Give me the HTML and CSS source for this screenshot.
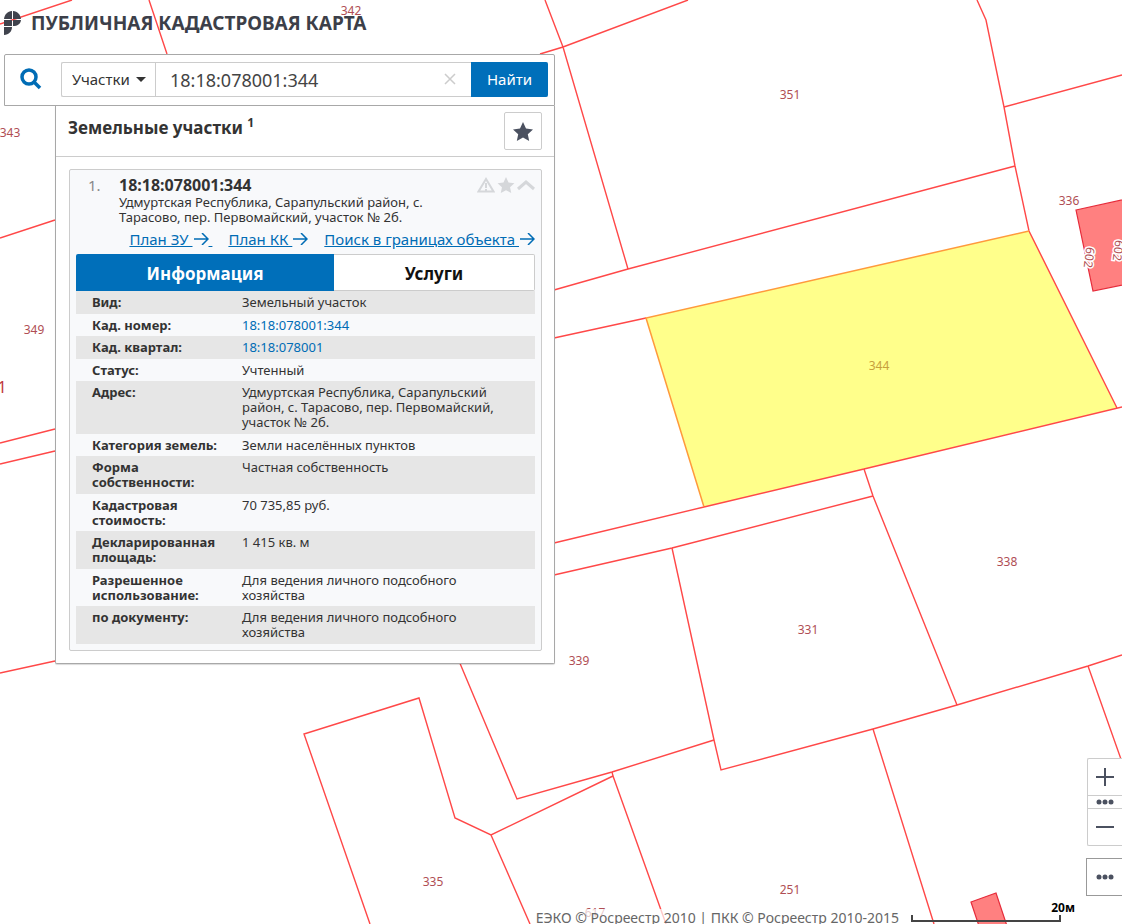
FILE: index.html
```html
<!DOCTYPE html>
<html lang="ru">
<head>
<meta charset="utf-8">
<meta name="viewport" content="width=device-width, initial-scale=1">
<title>Публичная кадастровая карта</title>
<link rel="stylesheet" href="styles.css">
</head>
<body>
<svg class="map" viewBox="0 0 1122 924" preserveAspectRatio="xMinYMin slice" role="img" aria-label="Карта участков">
  <polygon class="parcel" points="646,318 1029,231 1117,408 864,469 704,507"/>
  <g class="boundaries">
    <path d="M0 24 72 0M149 0 167 54M0 238 55 220M0 443 55 429M0 464 55 451M0 673 55 661"/>
    <path d="M540 54 563 47 688 0M545 0 563 47 628 269M554 290 628 269 1015 166M1122 75 1004 107"/>
    <path d="M977 0 986 20 1004 107 1015 166 1029 231 1117 408"/>
    <path d="M554 338 646 318M554 543 704 507M864 469 1122 407M554 575 672 548 873 496"/>
    <path d="M864 469 873 496 957 705M672 548 714 740 721 770 873 729 957 705 1088 666 1122 655"/>
    <path d="M873 729 934 924M1088 666 1122 762M459 661 517 799 612 772 714 740"/>
    <path d="M612 772 613 776 491 835 455 818 419 698 304 734 370 924M491 835 530 924M613 776 666 924"/>
  </g>
  <path class="parcel-edge" d="M1029 231 646 318 704 507"/>
  <path class="boundaries" d="M704 507 864 469"/>
  <polygon class="building" points="1076,210 1140,196 1152,279 1093,291"/>
  <polygon class="building" points="971,902 996,893 1007,926 979,926"/>
  <g class="labels">
    <text x="351" y="15">342</text><text x="10" y="137">343</text><text x="34" y="334">349</text>
    <text x="790" y="99">351</text><text x="1069" y="205">336</text><text x="879" y="370" class="selected">344</text>
    <text x="1007" y="566">338</text><text x="808" y="634">331</text><text x="579" y="665">339</text>
    <text x="433" y="886">335</text><text x="790" y="894">251</text><text x="595" y="917">617</text>
    <text x="2" y="393" class="quarter">1</text>
    <text class="house" transform="translate(1085 257) rotate(97)">602</text>
    <text class="house" transform="translate(1114 250) rotate(97)">602</text>
  </g>
</svg>

<header class="brand">
  <svg class="brand-mark" viewBox="0 0 18 26" aria-hidden="true">
    <path d="M8 1v8H0C.5 4.500 3.500 1.300 8 1zM9 1c4.500.3 7.500 3.500 8 8H9zM0 10h8v6H0zM9 10h8c-.5 4-3.500 6-8 6zM0 17h8c0 4.500-3 7.500-8 8z"/>
  </svg>
  <h1 class="brand-name">ПУБЛИЧНАЯ КАДАСТРОВАЯ КАРТА</h1>
</header>

<main class="sidebar">
  <form class="search" role="search">
    <svg class="search-icon" viewBox="0 0 22 22" aria-hidden="true"><circle cx="9" cy="9" r="7"/><path d="m14 14 6 6"/></svg>
    <div class="search-group">
      <div class="kind">
        <select class="kind-select" aria-label="Тип объекта"><option>Участки</option></select>
        <svg class="kind-caret" viewBox="0 0 10 5" aria-hidden="true"><path d="M0 0h10L5 5z"/></svg>
      </div>
      <input class="query" type="text" aria-label="Кадастровый номер" value="18:18:078001:344">
      <button class="clear" type="button" aria-label="Очистить"><svg viewBox="0 0 12 12"><path d="m1 1 10 10M11 1 1 11"/></svg></button>
      <button class="submit" type="button">Найти</button>
    </div>
  </form>

  <section class="results">
    <div class="results-head">
      <h2 class="results-title">Земельные участки <sup>1</sup></h2>
      <button class="favorites" type="button" aria-label="Избранное"><svg viewBox="0 0 20 19"><path d="m10 0 3 6.600 7 .8-5.200 4.800L16.200 19 10 15.600 3.800 19l1.400-6.800L0 7.400l7-.8z"/></svg></button>
    </div>

    <article class="card">
      <div class="card-head">
        <span class="card-index">1.</span>
        <div class="card-summary">
          <h3 class="card-title">18:18:078001:344</h3>
          <p class="card-address">Удмуртская Республика, Сарапульский район, с.<br>Тарасово, пер. Первомайский, участок № 2б.</p>
        </div>
        <div class="card-tools">
          <button type="button" class="tool" aria-label="Сообщить об ошибке"><svg class="outline" viewBox="0 0 18 16"><path d="M9 2 1.500 14.500h15z"/><path d="M9 6v5M9 12v2"/></svg></button>
          <button type="button" class="tool" aria-label="В избранное"><svg class="solid" viewBox="0 0 20 19"><path d="m10 0 3 6.600 7 .8-5.200 4.800L16.200 19 10 15.600 3.800 19l1.400-6.800L0 7.400l7-.8z"/></svg></button>
          <button type="button" class="tool" aria-label="Свернуть"><svg class="chevron" viewBox="0 0 18 16"><path d="m1 12 8-7 8 7"/></svg></button>
        </div>
      </div>
      <nav class="card-links">
        <a href="#zu">План ЗУ <svg viewBox="0 0 15 12" aria-hidden="true"><path d="M0 6h14M8 0l6 6-6 6"/></svg>&nbsp;</a>
        <a href="#kk">План КК <svg viewBox="0 0 15 12" aria-hidden="true"><path d="M0 6h14M8 0l6 6-6 6"/></svg></a>
        <a href="#within">Поиск в границах объекта <svg viewBox="0 0 15 12" aria-hidden="true"><path d="M0 6h14M8 0l6 6-6 6"/></svg></a>
      </nav>
      <div class="tabs" role="tablist">
        <button class="tab tab-active" type="button" role="tab" aria-selected="true">Информация</button>
        <button class="tab" type="button" role="tab" aria-selected="false">Услуги</button>
      </div>
      <table class="facts">
        <tbody>
          <tr><th scope="row">Вид:</th><td>Земельный участок</td></tr>
          <tr><th scope="row">Кад. номер:</th><td><a href="#parcel">18:18:078001:344</a></td></tr>
          <tr><th scope="row">Кад. квартал:</th><td><a href="#quarter">18:18:078001</a></td></tr>
          <tr><th scope="row">Статус:</th><td>Учтенный</td></tr>
          <tr><th scope="row">Адрес:</th><td>Удмуртская Республика, Сарапульский район, с. Тарасово, пер. Первомайский, участок № 2б.</td></tr>
          <tr><th scope="row">Категория земель:</th><td>Земли населённых пунктов</td></tr>
          <tr><th scope="row">Форма собственности:</th><td>Частная собственность</td></tr>
          <tr><th scope="row">Кадастровая стоимость:</th><td>70 735,85 руб.</td></tr>
          <tr><th scope="row">Декларированная площадь:</th><td>1 415 кв. м</td></tr>
          <tr><th scope="row">Разрешенное использование:</th><td>Для ведения личного подсобного хозяйства</td></tr>
          <tr><th scope="row">по документу:</th><td>Для ведения личного подсобного хозяйства</td></tr>
        </tbody>
      </table>
    </article>
  </section>
</main>

<aside class="controls">
  <div class="zoom">
    <button type="button" aria-label="Приблизить"><svg viewBox="0 0 18 18"><path d="M0 9h18M9 0v18"/></svg></button>
    <button type="button" class="zoom-levels" aria-label="Масштабы"><svg class="dots" viewBox="0 0 18 6"><circle cx="3" cy="3" r="2.500"/><circle cx="9" cy="3" r="2.500"/><circle cx="15" cy="3" r="2.500"/></svg></button>
    <button type="button" aria-label="Отдалить"><svg viewBox="0 0 18 18"><path d="M0 9h18"/></svg></button>
  </div>
  <button type="button" class="more" aria-label="Ещё"><svg class="dots" viewBox="0 0 18 6"><circle cx="3" cy="3" r="2.500"/><circle cx="9" cy="3" r="2.500"/><circle cx="15" cy="3" r="2.500"/></svg></button>
</aside>

<footer class="footer">
  <p class="attribution">ЕЭКО © Росреестр 2010 | ПКК © Росреестр 2010-2015</p>
  <div class="scale"><span class="scale-label">20м</span><div class="scale-bar"></div></div>
</footer>
</body>
</html>
```
FILE: styles.css
```css
* { box-sizing: border-box; }

body {
  position: relative;
  min-height: 100vh;
  margin: 0;
  overflow: hidden;
  background: #fff;
  color: #333;
  font: 13px/15px "Noto Sans", "Open Sans", sans-serif;
}

h1, h2, h3, p { margin: 0; }
button, input, select { margin: 0; font-family: inherit; }
button { padding: 0; border: 0; background: none; cursor: pointer; }
svg { display: block; }
a { color: #006cb5; }

/* Map canvas */
.map { position: absolute; inset: 0; width: 100%; height: 100%; }
.parcel { fill: #ffff8b; }
.parcel-edge { fill: none; stroke: #ff9a3c; stroke-width: 1.500; }
.boundaries { fill: none; stroke: #ff4848; stroke-width: 1.400; }
.building { fill: #ff8080; stroke: #e62b3a; stroke-width: 1.200; }
.labels { fill: #b04e54; font-size: 12px; text-anchor: middle; }
.labels .selected { fill: #c8a03c; }
.labels .quarter { fill: #c03a40; font-size: 16px; }
.labels .house { stroke: #fff; stroke-width: 3; paint-order: stroke; }

/* Brand */
.brand { position: relative; display: flex; align-items: center; gap: 9px; height: 46px; padding-left: 4px; }
.brand-mark { width: 18px; height: 26px; fill: #40434d; }
.brand-name { color: #3c3f49; font-size: 19px; line-height: 26px; }

/* Search bar */
.sidebar { position: relative; max-width: 555px; padding: 8px 0 0 4px; }
.search {
  display: flex;
  align-items: center;
  justify-content: space-between;
  height: 52px;
  padding: 0 6px 2px 15px;
  border: 1px solid #a8a8a8;
  border-radius: 2px 2px 0 0;
  background: #fff;
}
.search-icon { width: 22px; height: 22px; fill: none; stroke: #006cb5; stroke-width: 3.500; }
.search-group { display: flex; flex: 1; height: 35px; margin-left: 19px; border: 1px solid #ccc; border-right: 0; border-radius: 2px; }
.kind { display: flex; align-items: center; width: 94px; padding-right: 9px; border-right: 1px solid #ccc; }
.kind-select { flex: 1; min-width: 0; padding: 0 0 0 10px; border: 0; background: none; color: #333; font-size: 15px; appearance: none; }
.kind-caret { width: 10px; height: 5px; fill: #333; }
.query { flex: 1; min-width: 0; padding: 2px 0 0 14px; border: 0; background: none; color: #444; font-size: 18px; }
.clear { width: 42px; }
.clear svg { width: 12px; height: 12px; margin: 0 auto; stroke: #ccc; stroke-width: 1.500; }
.submit { width: 77px; height: 35px; margin: -1px 0; background: #006fba; color: #fff; font-size: 15px; border-radius: 0 2px 2px 0; }

/* Results panel */
.results {
  margin-left: 51px;
  padding-bottom: 12px;
  border: 1px solid #a8a8a8;
  border-top: 0;
  border-radius: 0 0 2px 2px;
  background: #fff;
  box-shadow: 0 1px 1px rgb(0 0 0 / 15%);
}
.results-head { display: flex; align-items: center; justify-content: space-between; height: 51px; padding: 0 12px; border-bottom: 1px solid #ccc; }
.results-title { font-size: 17px; line-height: 22px; padding-bottom: 6px; }
.results-title sup { font-size: 12px; line-height: 0; }
.favorites { width: 38px; height: 38px; border: 1px solid #ccc; border-radius: 2px; }
.favorites svg { width: 20px; height: 19px; margin: 0 auto; fill: #4b5160; }

.card { margin: 12px 12px 0 13px; padding: 6px; border: 1px solid #ccc; border-radius: 2px; background: #f8f9fb; }
.card-head { display: flex; align-items: flex-start; }
.card-index { width: 43px; padding-left: 12px; color: #888; font-size: 15px; line-height: 19px; }
.card-summary { flex: 1; white-space: nowrap; }
.card-title { font-size: 16px; line-height: 19px; }
.card-tools { display: flex; gap: 2px; padding-top: 1px; }
.tool svg { width: 18px; height: 16px; }
.outline { fill: none; stroke: #d5d7da; stroke-width: 2; }
.chevron { fill: none; stroke: #d5d7da; stroke-width: 3; }
.solid { fill: #d5d7da; }
.card-links { display: flex; justify-content: flex-end; gap: 16px; padding: 4px 0 5px; font-size: 15px; line-height: 20px; white-space: nowrap; }
.card-links svg { display: inline-block; width: 15px; height: 12px; margin-left: 1px; fill: none; stroke: #006cb5; stroke-width: 1.500; }

.tabs { display: flex; }
.tab { flex: 1 1 201px; height: 37px; padding: 2px 0 0; border: 1px solid #ccc; border-left: 0; border-radius: 0 2px 2px 0; background: #fff; color: #111; font-size: 17px; font-weight: 700; }
.tab-active { flex-basis: 258px; border: 0; border-radius: 2px 0 0 0; background: #006fba; color: #fff; }

.facts { width: 100%; border-collapse: collapse; table-layout: fixed; }
.facts th, .facts td { padding: 4px 20px 3px 0; font-size: 13px; line-height: 15px; text-align: left; vertical-align: top; }
.facts th { width: 166px; padding-left: 16px; padding-right: 20px; }
.facts tr:nth-child(odd) { background: #e6e6e6; }
.facts tr:nth-child(odd) > * { padding-bottom: 4px; }
.facts a { text-decoration: none; }

/* Map controls */
.controls { position: absolute; right: 0; bottom: 28px; display: flex; flex-direction: column; align-items: flex-end; gap: 12px; }
.controls button { display: flex; align-items: center; justify-content: center; width: 34px; height: 36px; }
.controls svg { width: 18px; height: 18px; stroke: #4b5160; stroke-width: 2; }
.controls .dots { height: 6px; fill: #4b5160; stroke: none; }
.zoom { border: 1px solid #ccc; border-right: 0; border-radius: 2px 0 0 2px; background: #fff; }
.controls .zoom-levels { height: 14px; border-top: 1px solid #ccc; border-bottom: 1px solid #ccc; }
.controls .more { width: 36px; height: 38px; border: 1px solid #999; border-right: 0; background: #fff; }

/* Attribution and scale */
.footer { position: absolute; right: 47px; bottom: 0; display: flex; align-items: flex-end; gap: 8px; }
.attribution { height: 15px; padding: 0 4px; background: rgb(255 255 255 / 70%); color: #666; font-size: 14px; line-height: 18px; white-space: nowrap; }
.scale { width: 164px; padding-bottom: 2px; }
.scale-label { display: block; color: #000; font-size: 12px; font-weight: 700; line-height: 14px; text-align: right; }
.scale-bar { width: 150px; height: 7px; border: solid #444; border-width: 0 2px 2px; }
```
